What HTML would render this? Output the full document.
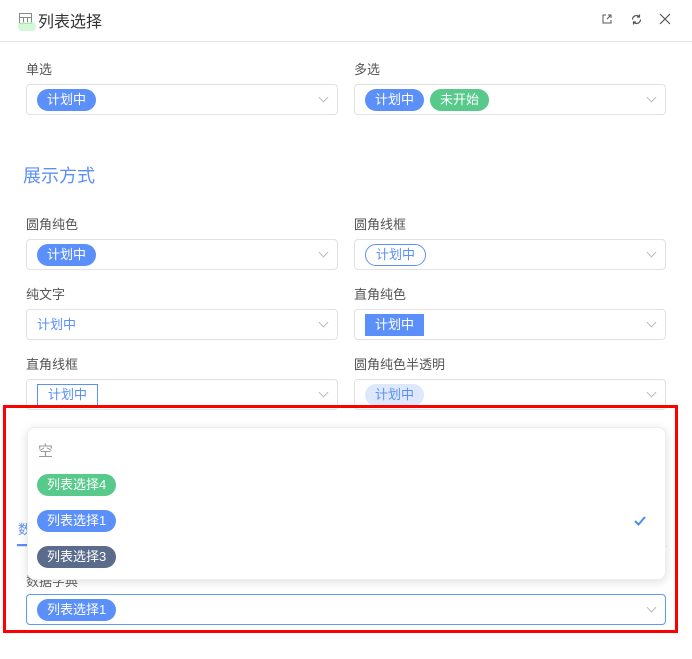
<!DOCTYPE html>
<html><head><meta charset="utf-8"><style>
*{box-sizing:border-box;margin:0;padding:0}
body{width:692px;height:659px;background:#fff;font-family:"Liberation Sans","Noto Sans CJK SC",sans-serif;position:relative;overflow:hidden;color:#555}
.abs{position:absolute}
.lbl{position:absolute;font-size:13px;color:#555}
.inp{position:absolute;height:31px;border:1px solid #e2e2e2;border-radius:4px;background:#fff}
.inp .ar{position:absolute;right:10px;top:9px;width:7px;height:7px;border-right:1px solid #bbb;border-bottom:1px solid #bbb;transform:rotate(45deg)}
.tag{position:absolute;top:4px;left:10px;height:22px;line-height:22px;font-size:13px;padding:0 10px;border-radius:11px;background:#5b8ff9;color:#fff;white-space:nowrap}
</style></head><body>
<div class="abs" style="left:19px;top:13px;width:13px;height:11px;border:1px solid #888"></div>
<div class="abs" style="left:19px;top:17px;width:13px;height:1px;background:#888"></div>
<div class="abs" style="left:23px;top:17px;width:1px;height:7px;background:#888"></div>
<div class="abs" style="left:27px;top:17px;width:1px;height:7px;background:#888"></div>
<div class="abs" style="left:18px;top:22px;width:18px;height:9px;background:#c8f5cf;border-radius:4px;opacity:.8"></div>
<div class="abs" style="left:38px;top:8px;font-size:16px;color:#333">列表选择</div>
<svg class="abs" style="left:601px;top:13px" width="12" height="12" viewBox="0 0 12 12" fill="none" stroke="#555" stroke-width="1"><path d="M5 2H2v8h8V7M6 6l4-4M7 2h3v3"/></svg>
<svg class="abs" style="left:630px;top:13px" width="13" height="13" viewBox="0 0 13 13" fill="none" stroke="#555" stroke-width="1.2"><path d="M2.5 6.5a4 4 0 0 1 7-2.6M10.5 6.5a4 4 0 0 1-7 2.6M9.5 1.5v2.5H7M3.5 11.5V9H6"/></svg>
<svg class="abs" style="left:659px;top:13px" width="12" height="12" viewBox="0 0 12 12" stroke="#555" stroke-width="1.2"><path d="M1 1l10 10M11 1L1 11"/></svg>
<div class="abs" style="left:0;top:41px;width:692px;height:1px;background:#e4e4e4"></div>

<div class="lbl" style="left:26px;top:59px">单选</div>
<div class="inp" style="left:26px;top:84px;width:312px"><span class="tag">计划中</span><i class="ar"></i></div>
<div class="lbl" style="left:354px;top:59px">多选</div>
<div class="inp" style="left:354px;top:84px;width:312px"><span class="tag">计划中</span><span class="tag" style="left:75px;background:#56c98b">未开始</span><i class="ar"></i></div>

<div class="abs" style="left:23px;top:162px;font-size:18px;color:#5b8ff9">展示方式</div>

<div class="lbl" style="left:26px;top:214px">圆角纯色</div>
<div class="inp" style="left:26px;top:239px;width:312px"><span class="tag">计划中</span><i class="ar"></i></div>
<div class="lbl" style="left:354px;top:214px">圆角线框</div>
<div class="inp" style="left:354px;top:239px;width:312px"><span class="tag" style="background:#fff;color:#5b8ff9;border:1px solid #5b8ff9;line-height:20px">计划中</span><i class="ar"></i></div>

<div class="lbl" style="left:26px;top:284px">纯文字</div>
<div class="inp" style="left:26px;top:309px;width:312px"><span class="tag" style="background:none;color:#5b8ff9;left:0">计划中</span><i class="ar"></i></div>
<div class="lbl" style="left:354px;top:284px">直角纯色</div>
<div class="inp" style="left:354px;top:309px;width:312px"><span class="tag" style="border-radius:0">计划中</span><i class="ar"></i></div>

<div class="lbl" style="left:26px;top:354px">直角线框</div>
<div class="inp" style="left:26px;top:379px;width:312px"><span class="tag" style="border-radius:0;background:#fff;color:#5b8ff9;border:1px solid #5b8ff9;line-height:20px">计划中</span><i class="ar"></i></div>
<div class="lbl" style="left:354px;top:354px">圆角纯色半透明</div>
<div class="inp" style="left:354px;top:379px;width:312px"><span class="tag" style="background:#dde8fd;color:#5b8ff9">计划中</span><i class="ar"></i></div>

<div class="abs" style="left:18px;top:519px;font-size:13px;color:#5b8ff9">数</div>
<div class="abs" style="left:17px;top:544px;width:11px;height:2px;background:#5b8ff9"></div>
<div class="abs" style="left:17px;top:546px;width:650px;height:1px;background:#e4e4e4"></div>
<div class="lbl" style="left:26px;top:571px;color:#666">数据字典</div>
<div class="inp" style="left:26px;top:594px;width:640px;border-color:#5b9bf0"><span class="tag">列表选择1</span><i class="ar"></i></div>

<div class="abs" style="left:27px;top:427px;width:639px;height:153px;background:#fff;border-radius:8px;box-shadow:0 2px 10px rgba(0,0,0,.13);border:1px solid #eee">
<div class="abs" style="left:10px;top:12px;font-size:15px;color:#999">空</div>
<span class="tag" style="top:46px;left:9px;background:#56c98b">列表选择4</span>
<span class="tag" style="top:82px;left:9px">列表选择1</span>
<span class="tag" style="top:118px;left:9px;background:#5a6b8c">列表选择3</span>
<svg class="abs" style="left:605px;top:87px" width="14" height="12" viewBox="0 0 14 12" fill="none" stroke="#4a90e2" stroke-width="2"><path d="M2 6l3.5 3.5L12 2"/></svg>
</div>

<div class="abs" style="left:3px;top:405px;width:675px;height:228px;border:3px solid #f00"></div>
</body></html>
